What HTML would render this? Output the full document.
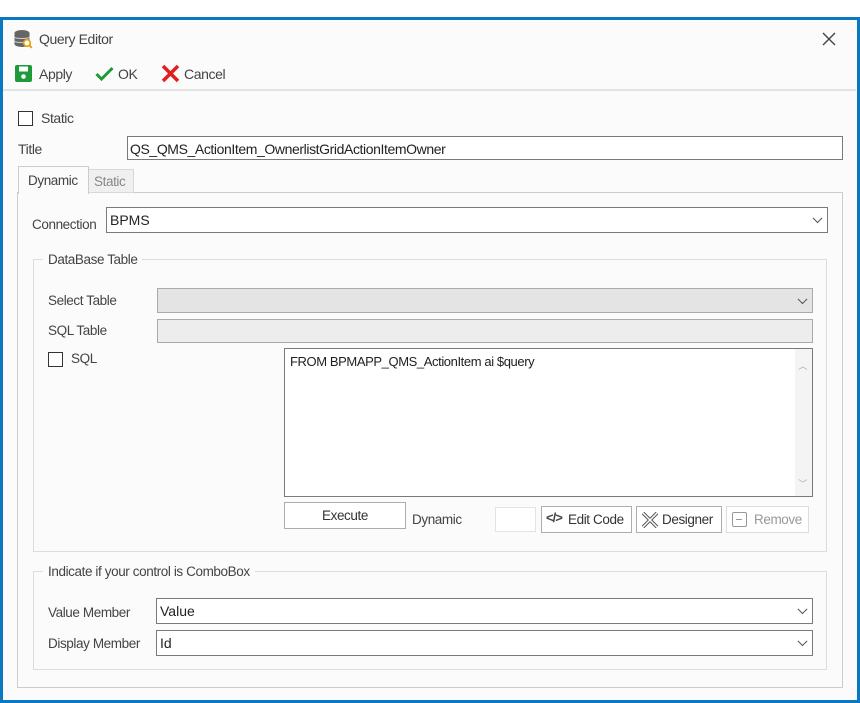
<!DOCTYPE html>
<html><head><style>
*{box-sizing:border-box;margin:0;padding:0}
body{width:860px;height:703px;background:#fff;position:relative;overflow:hidden;font-family:"Liberation Sans",sans-serif;font-size:13px;color:#333}
.a{position:absolute}
.box{position:absolute;border:1px solid #7a7a7a;background:#fff}
.lbl{position:absolute;font-size:13.5px;color:#444;letter-spacing:-0.4px}
.chev{position:absolute;right:6px;top:50%;width:7px;height:7px;border-right:1.5px solid #555;border-bottom:1.5px solid #555;transform:translateY(-75%) rotate(45deg)}
.btn{position:absolute;border:1px solid #adadad;background:#fff;font-size:13.5px;color:#333;text-align:center;letter-spacing:-0.4px}
</style></head><body>
<div class="a" style="left:0;top:17px;width:860px;height:686px;border:3px solid #0a78c0;background:#fbfbfb"></div>
<svg class="a" style="left:13px;top:29px" width="20" height="20" viewBox="0 0 20 20"><ellipse cx="9" cy="4" rx="7.5" ry="3" fill="#666"/><rect x="1.5" y="4" width="15" height="11" fill="#666"/><ellipse cx="9" cy="15" rx="7.5" ry="3" fill="#666"/><path d="M1.5 8c0 2 15 2 15 0M1.5 12c0 2 15 2 15 0" stroke="#ccc" fill="none"/><circle cx="14" cy="14" r="3.3" fill="#fff" stroke="#e8a000" stroke-width="1.6"/><path d="M16.3 16.3l2.5 2.5" stroke="#e8a000" stroke-width="2"/></svg>
<div class="lbl" style="left:39px;top:31px;font-size:14px">Query Editor</div>
<svg class="a" style="left:822px;top:32px" width="14" height="14" viewBox="0 0 14 14"><path d="M1 1l12 12M13 1L1 13" stroke="#444" stroke-width="1.4"/></svg>
<svg class="a" style="left:15px;top:65px" width="18" height="17" viewBox="0 0 18 17"><rect x="0" y="0" width="17" height="17" rx="2" fill="#1f9a3a"/><rect x="4" y="1.5" width="9" height="5" fill="#fff"/><circle cx="8.5" cy="11.5" r="2.3" fill="#fff"/></svg>
<div class="lbl" style="left:39px;top:66px;font-size:14px">Apply</div>
<svg class="a" style="left:95px;top:66px" width="19" height="15" viewBox="0 0 19 15"><path d="M1.5 8l5 5L17.5 2" stroke="#1f9a3a" stroke-width="3" fill="none"/></svg>
<div class="lbl" style="left:118px;top:66px;font-size:14px">OK</div>
<svg class="a" style="left:161px;top:64px" width="19" height="19" viewBox="0 0 19 19"><path d="M2 2l15 15M17 2L2 17" stroke="#e0201e" stroke-width="3.5"/></svg>
<div class="lbl" style="left:184px;top:66px;font-size:14px">Cancel</div>
<div class="a" style="left:3px;top:89px;width:853px;height:2px;background:#e3e3e3"></div>
<div class="a" style="left:18px;top:111px;width:15px;height:15px;border:1px solid #333;background:#fff"></div>
<div class="lbl" style="left:41px;top:110px;font-size:14px">Static</div>
<div class="lbl" style="left:18px;top:141px;font-size:14px">Title</div>
<div class="box" style="left:127px;top:136px;width:716px;height:24px;padding:4px 2px;font-size:14px;color:#222;letter-spacing:-0.4px">QS_QMS_ActionItem_OwnerlistGridActionItemOwner</div>
<div class="a" style="left:17px;top:192px;width:826px;height:496px;border:1px solid #ccc;background:#fbfbfb"></div>
<div class="a" style="left:88px;top:169px;width:46px;height:24px;border:1px solid #d8d8d8;background:#f0f0f0"></div>
<div class="lbl" style="left:94px;top:174px;color:#888">Static</div>
<div class="a" style="left:18px;top:166px;width:71px;height:28px;border:1px solid #ccc;border-bottom:none;background:#fbfbfb"></div>
<div class="lbl" style="left:28px;top:173px">Dynamic</div>
<div class="lbl" style="left:32px;top:217px">Connection</div>
<div class="box" style="left:106px;top:207px;width:722px;height:26px;padding:4px 3px;font-size:14px;color:#222">BPMS<span class="chev"></span></div>
<div class="a" style="left:33px;top:259px;width:794px;height:293px;border:1px solid #ddd"></div>
<div class="lbl" style="left:43px;top:252px;background:#fbfbfb;padding:0 5px">DataBase Table</div>
<div class="lbl" style="left:48px;top:293px">Select Table</div>
<div class="box" style="left:157px;top:288px;width:656px;height:25px;background:#e4e4e4;border-color:#aaa"><span class="chev"></span></div>
<div class="lbl" style="left:48px;top:323px">SQL Table</div>
<div class="box" style="left:157px;top:319px;width:656px;height:24px;background:#ededed;border-color:#aaa"></div>
<div class="a" style="left:48px;top:352px;width:15px;height:15px;border:1px solid #333;background:#fff"></div>
<div class="lbl" style="left:71px;top:351px">SQL</div>
<div class="box" style="left:284px;top:348px;width:529px;height:149px;padding:5px 5px;font-size:13px;color:#222;letter-spacing:-0.4px">FROM BPMAPP_QMS_ActionItem ai $query
<div class="a" style="right:0;top:0;width:17px;height:147px;background:#f4f4f4"></div>
<div class="a" style="right:5px;top:10px;color:#aaa;font-size:9px">︿</div>
<div class="a" style="right:5px;bottom:6px;color:#aaa;font-size:9px">﹀</div></div>
<div class="btn" style="left:284px;top:502px;width:122px;height:27px;padding-top:5px">Execute</div>
<div class="lbl" style="left:412px;top:512px">Dynamic</div>
<div class="a" style="left:495px;top:507px;width:41px;height:25px;border:1px solid #e3e3e3;background:#fff"></div>
<div class="btn" style="left:541px;top:506px;width:91px;height:27px;padding:5px 0 0 26px;text-align:left">Edit Code</div>
<div class="a" style="left:546px;top:510px;font-size:13px;font-weight:bold;color:#444;letter-spacing:-1px">&lt;/&gt;</div>
<div class="btn" style="left:636px;top:506px;width:86px;height:27px;padding:5px 0 0 25px;text-align:left">Designer</div>
<svg class="a" style="left:641px;top:511px" width="18" height="18" viewBox="0 0 18 18"><path d="M2 2l14 14M16 2L2 16" stroke="#555" stroke-width="3.5" fill="none"/><path d="M2 2l14 14M16 2L2 16" stroke="#fff" stroke-width="1.5" fill="none"/></svg>
<div class="btn" style="left:726px;top:506px;width:83px;height:27px;padding:5px 0 0 27px;text-align:left;color:#999;border-color:#ddd">Remove</div>
<div class="a" style="left:732px;top:512px;width:15px;height:15px;border:1.5px solid #999;border-radius:2px"><div class="a" style="left:3px;top:5.5px;width:6px;height:1.5px;background:#999"></div></div>
<div class="a" style="left:33px;top:571px;width:794px;height:99px;border:1px solid #ddd"></div>
<div class="lbl" style="left:43px;top:564px;background:#fbfbfb;padding:0 5px">Indicate if your control is ComboBox</div>
<div class="lbl" style="left:48px;top:605px">Value Member</div>
<div class="box" style="left:156px;top:598px;width:657px;height:26px;padding:4px 3px;font-size:14px;color:#222">Value<span class="chev"></span></div>
<div class="lbl" style="left:48px;top:636px">Display Member</div>
<div class="box" style="left:156px;top:630px;width:657px;height:26px;padding:4px 3px;font-size:14px;color:#222">Id<span class="chev"></span></div>
</body></html>
